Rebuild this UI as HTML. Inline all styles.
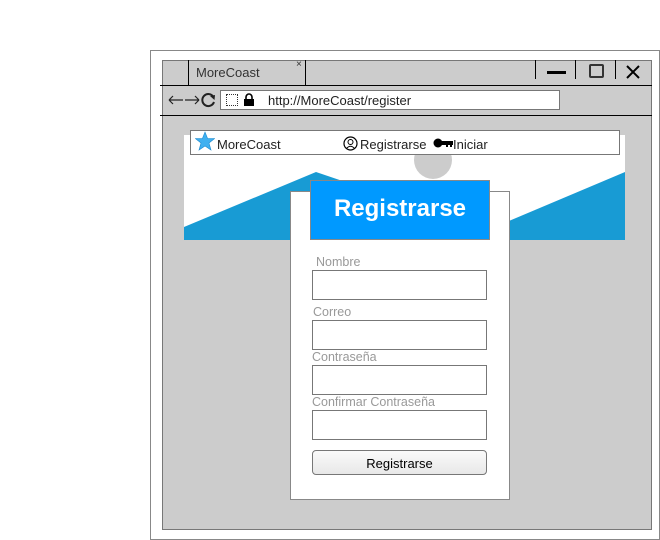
<!DOCTYPE html>
<html><head><meta charset="utf-8"><style>
*{margin:0;padding:0;box-sizing:border-box}
body{width:660px;height:540px;background:#fff;position:relative;overflow:hidden;font-family:"Liberation Sans",sans-serif;}
.a{position:absolute}
.lbl{position:absolute;font-size:12.5px;color:#999}
.inp{position:absolute;left:312px;width:175px;height:30px;background:#fff;border:1px solid #777}
</style></head><body>
<div class="a" style="left:150px;top:50px;width:510px;height:490px;border:1px solid #888;background:#fff"></div>
<div class="a" style="left:162px;top:60px;width:490px;height:470px;border:1px solid #777;background:#ccc"></div>
<div class="a" style="left:188px;top:60px;width:118px;height:25px;border-left:1px solid #000;border-right:1px solid #000"></div>
<div class="a" style="left:196px;top:65px;font-size:13px;color:#333">MoreCoast</div>
<div class="a" style="left:296px;top:59px;font-size:10px;color:#333">×</div>
<div class="a" style="left:535px;top:60px;width:1px;height:19px;background:#000"></div>
<div class="a" style="left:575px;top:60px;width:1px;height:19px;background:#000"></div>
<div class="a" style="left:615px;top:60px;width:1px;height:19px;background:#000"></div>
<div class="a" style="left:547px;top:71px;width:19px;height:3px;background:#000"></div>
<div class="a" style="left:589px;top:64px;width:15px;height:14px;border:2px solid #333;border-radius:2px"></div>
<svg class="a" style="left:625px;top:64px" width="16" height="16"><path d="M2 2L14 14M14 2L2 14" stroke="#000" stroke-width="2"/></svg>
<div class="a" style="left:160px;top:85px;width:492px;height:1px;background:#000"></div>
<div class="a" style="left:160px;top:115px;width:492px;height:1px;background:#000"></div>
<svg class="a" style="left:168px;top:94px" width="33" height="12"><path d="M1 6H15M1 6L5 2M1 6L5 10M17 6H31M31 6L27 2M31 6L27 10" stroke="#222" stroke-width="1.2" fill="none"/></svg>
<svg class="a" style="left:201px;top:92px" width="16" height="16"><path d="M12.5 5A6 6 0 1 0 13 10" stroke="#222" stroke-width="2" fill="none"/><path d="M9 4L14 3L13.5 8Z" fill="#222"/></svg>
<div class="a" style="left:220px;top:90px;width:340px;height:20px;background:#fff;border:1px solid #777"></div>
<div class="a" style="left:226px;top:94px;width:12px;height:12px;border:1px dotted #333"></div>
<svg class="a" style="left:243px;top:93px" width="12" height="13"><rect x="1" y="6" width="10" height="7" fill="#000"/><path d="M3 6V4a3 3 0 0 1 6 0v2" stroke="#000" stroke-width="1.6" fill="none"/></svg>
<div class="a" style="left:268px;top:93px;font-size:13px;color:#222">http://MoreCoast/register</div>
<div class="a" style="left:184px;top:135px;width:441px;height:105px;background:#fff;overflow:hidden">
<svg width="441" height="105"><polygon points="0,92 132,37 200,60 200,105 0,105" fill="#189bd4"/><polygon points="441,37 441,105 320,105 320,88" fill="#189bd4"/><circle cx="249" cy="25" r="19" fill="#ccc"/></svg>
</div>
<div class="a" style="left:190px;top:130px;width:430px;height:25px;background:#fff;border:1px solid #777"></div>
<svg class="a" style="left:195px;top:131px" width="20" height="20"><polygon points="10,1 12.6,7.5 19.5,7.6 14,12 16,19 10,15 4,19 6,12 0.5,7.6 7.4,7.5" fill="#3fb0f0" stroke="#1a8ad0" stroke-width=".6"/></svg>
<div class="a" style="left:217px;top:137px;font-size:13px;color:#222">MoreCoast</div>
<svg class="a" style="left:343px;top:136px" width="15" height="15"><circle cx="7.5" cy="7.5" r="6.5" stroke="#000" fill="none" stroke-width="1.2"/><circle cx="7.5" cy="6" r="2.5" stroke="#000" fill="none"/><path d="M3.5 12.5Q7.5 8 11.5 12.5" stroke="#000" fill="none"/></svg>
<div class="a" style="left:360px;top:137px;font-size:13px;color:#222">Registrarse</div>
<svg class="a" style="left:433px;top:137px" width="20" height="12"><circle cx="5" cy="6" r="4.5" fill="#000"/><rect x="8" y="4" width="12" height="4" fill="#000"/><rect x="13" y="7" width="2" height="3" fill="#000"/><rect x="17" y="7" width="2" height="3" fill="#000"/></svg>
<div class="a" style="left:453px;top:137px;font-size:13px;color:#222">Iniciar</div>
<div class="a" style="left:290px;top:191px;width:220px;height:309px;background:#fff;border:1px solid #888"></div>
<div class="a" style="left:310px;top:180px;width:180px;height:60px;background:#0099ff;border:1px solid #888;color:#fff;font-weight:bold;font-size:24px;text-align:center;line-height:56px">Registrarse</div>
<div class="lbl" style="left:316px;top:255px">Nombre</div>
<div class="inp" style="top:270px"></div>
<div class="lbl" style="left:313px;top:305px">Correo</div>
<div class="inp" style="top:320px"></div>
<div class="lbl" style="left:312px;top:350px">Contraseña</div>
<div class="inp" style="top:365px"></div>
<div class="lbl" style="left:312px;top:395px">Confirmar Contraseña</div>
<div class="inp" style="top:410px"></div>
<div class="a" style="left:312px;top:450px;width:175px;height:25px;border:1px solid #777;border-radius:4px;background:linear-gradient(#fafafa,#e8e8e8);font-size:13px;color:#000;text-align:center;line-height:26px">Registrarse</div>
</body></html>
